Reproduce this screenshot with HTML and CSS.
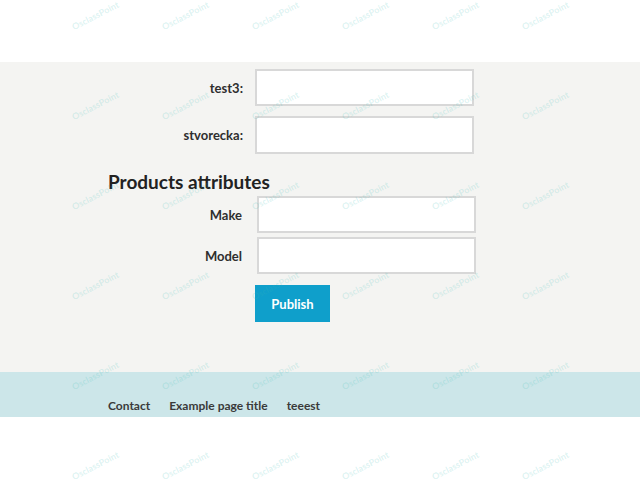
FILE: index.html
```html
<!DOCTYPE html>
<html>
<head>
<meta charset="utf-8">
<link rel="stylesheet" href="styles.css">
</head>
<body>
<div class="header"></div>
<main class="main">
  <div class="container">
    <div class="group">
      <div class="row"><label class="lbl">test3:</label><input class="field" type="text"></div>
      <div class="row"><label class="lbl">stvorecka:</label><input class="field" type="text"></div>
    </div>
    <h2 class="heading">Products attributes</h2>
    <div class="group attrs">
      <div class="row"><label class="lbl">Make</label><input class="field" type="text"></div>
      <div class="row"><label class="lbl">Model</label><input class="field" type="text"></div>
    </div>
    <div class="actions"><button class="btn">Publish</button></div>
  </div>
</main>
<footer class="footer">
  <nav class="container links">
    <a class="link">Contact</a>
    <a class="link">Example page title</a>
    <a class="link">teeest</a>
  </nav>
</footer>
<div class="bottom"></div>
<div class="watermarks" aria-hidden="true">
  <span>OsclassPoint</span><span>OsclassPoint</span><span>OsclassPoint</span><span>OsclassPoint</span><span>OsclassPoint</span><span>OsclassPoint</span>
  <span>OsclassPoint</span><span>OsclassPoint</span><span>OsclassPoint</span><span>OsclassPoint</span><span>OsclassPoint</span><span>OsclassPoint</span>
  <span>OsclassPoint</span><span>OsclassPoint</span><span>OsclassPoint</span><span>OsclassPoint</span><span>OsclassPoint</span><span>OsclassPoint</span>
  <span>OsclassPoint</span><span>OsclassPoint</span><span>OsclassPoint</span><span>OsclassPoint</span><span>OsclassPoint</span><span>OsclassPoint</span>
  <span>OsclassPoint</span><span>OsclassPoint</span><span>OsclassPoint</span><span>OsclassPoint</span><span>OsclassPoint</span><span>OsclassPoint</span>
  <span>OsclassPoint</span><span>OsclassPoint</span><span>OsclassPoint</span><span>OsclassPoint</span><span>OsclassPoint</span><span>OsclassPoint</span>
</div>
</body>
</html>
```
FILE: styles.css
```css
html, body {
  margin: 0;
  padding: 0;
}
body {
  width: 640px;
  height: 480px;
  overflow: hidden;
  background: #ffffff;
  font-family: Lato, "Noto Sans", sans-serif;
  color: #2b2b2b;
  position: relative;
}
.header {
  height: 62px;
  background: #ffffff;
}
.main {
  background: #f4f4f2;
  padding: 7px 0 50px;
}
.container {
  width: 424px;
  margin: 0 auto;
}
.group {
  display: flex;
  flex-direction: column;
  gap: 10px;
}
.row {
  display: grid;
  grid-template-columns: 135px 219px;
  column-gap: 12px;
  align-items: center;
}
.attrs {
  gap: 4px;
}
.attrs .row {
  grid-template-columns: 134px 219px;
  column-gap: 15px;
}
.lbl {
  text-align: right;
  font-size: 13px;
  font-weight: 700;
  color: #2e2e2e;
}
.field {
  box-sizing: border-box;
  height: 37px;
  width: 219px;
  margin: 0;
  border: 2px solid #d8d8d8;
  background: #ffffff;
  outline: none;
}
.row + .row .field {
  height: 38px;
}
.attrs .row + .row .field {
  height: 37px;
}
.heading {
  margin: 16px 0 2px;
  font-size: 19px;
  line-height: 24px;
  font-weight: 700;
  color: #222;
}
.actions {
  padding: 11px 0 0 147px;
}
.btn {
  width: 75px;
  height: 37px;
  border: 0;
  margin: 0;
  background: #0f9fcb;
  color: #ffffff;
  font-family: Lato, "Noto Sans", sans-serif;
  font-size: 13px;
  font-weight: 700;
}
.footer {
  height: 45px;
  box-sizing: border-box;
  background: #cce6e9;
  padding-top: 25px;
}
.links {
  display: flex;
  gap: 19px;
}
.link {
  font-size: 12px;
  font-weight: 700;
  color: #3a3a3a;
  line-height: 18px;
}
.bottom {
  height: 63px;
  background: #ffffff;
}
.watermarks {
  position: absolute;
  left: 50px;
  top: 0;
  display: grid;
  grid-template-columns: repeat(6, 90px);
  grid-auto-rows: 30px;
  row-gap: 60px;
  pointer-events: none;
}
.watermarks span {
  display: flex;
  align-items: center;
  justify-content: center;
  font-family: Lato, sans-serif;
  font-size: 9px;
  font-weight: 700;
  color: rgba(60, 190, 180, 0.18);
  transform: rotate(-27deg);
}
```
